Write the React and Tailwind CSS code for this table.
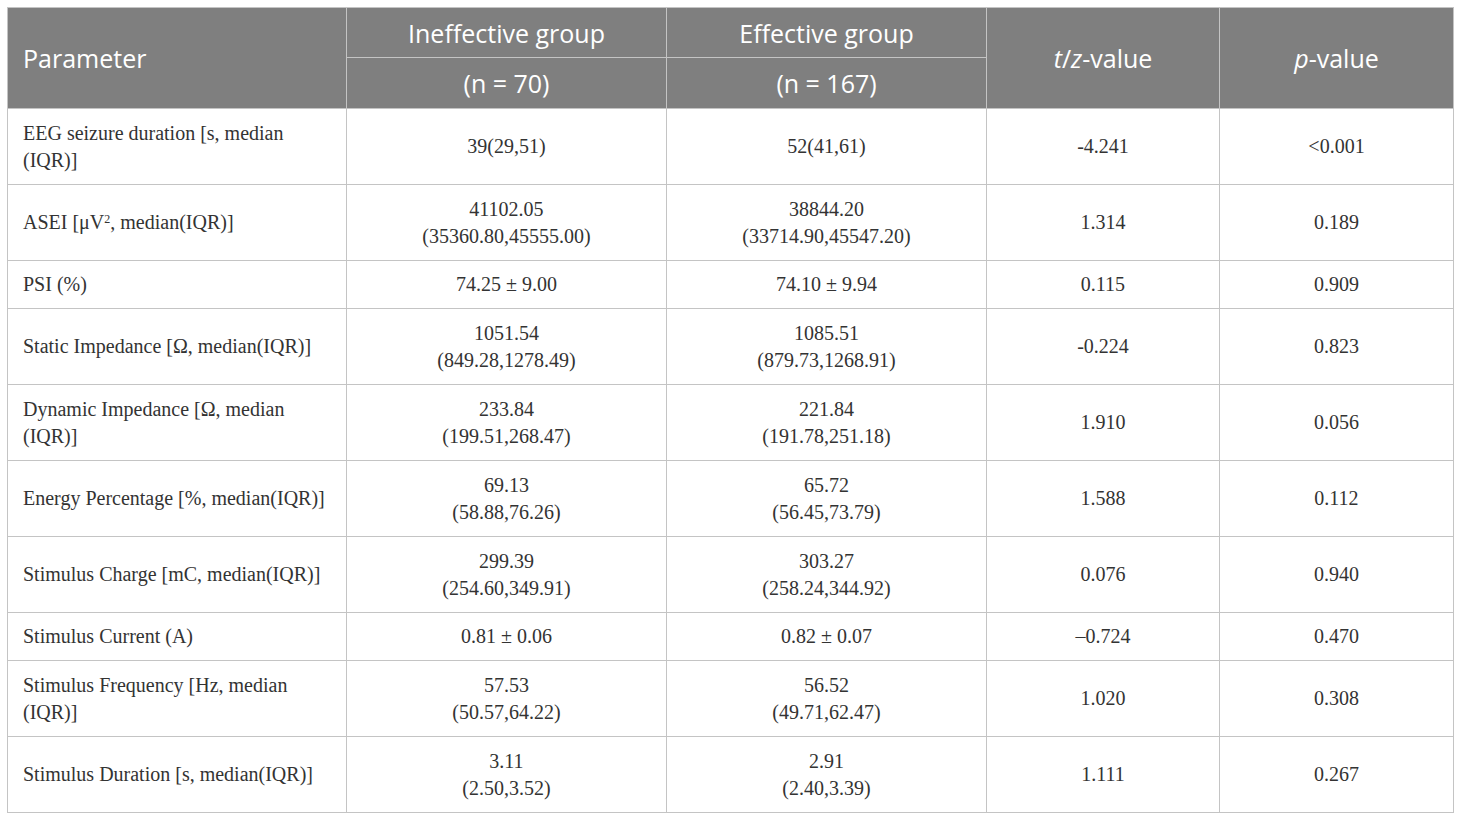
const rows = [
  { p: <>EEG seizure duration [s, median<br />(IQR)]</>, a: ["39(29,51)"], b: ["52(41,61)"], t: "-4.241", pv: "<0.001", h: "h-[76px]" },
  { p: <>ASEI [μV<sup className="text-[12px]">2</sup>, median(IQR)]</>, a: ["41102.05", "(35360.80,45555.00)"], b: ["38844.20", "(33714.90,45547.20)"], t: "1.314", pv: "0.189", h: "h-[76px]" },
  { p: "PSI (%)", a: ["74.25 ± 9.00"], b: ["74.10 ± 9.94"], t: "0.115", pv: "0.909", h: "h-[48px]" },
  { p: "Static Impedance [Ω, median(IQR)]", a: ["1051.54", "(849.28,1278.49)"], b: ["1085.51", "(879.73,1268.91)"], t: "-0.224", pv: "0.823", h: "h-[76px]" },
  { p: <>Dynamic Impedance [Ω, median<br />(IQR)]</>, a: ["233.84", "(199.51,268.47)"], b: ["221.84", "(191.78,251.18)"], t: "1.910", pv: "0.056", h: "h-[76px]" },
  { p: "Energy Percentage [%, median(IQR)]", a: ["69.13", "(58.88,76.26)"], b: ["65.72", "(56.45,73.79)"], t: "1.588", pv: "0.112", h: "h-[76px]" },
  { p: "Stimulus Charge [mC, median(IQR)]", a: ["299.39", "(254.60,349.91)"], b: ["303.27", "(258.24,344.92)"], t: "0.076", pv: "0.940", h: "h-[76px]" },
  { p: "Stimulus Current (A)", a: ["0.81 ± 0.06"], b: ["0.82 ± 0.07"], t: "–0.724", pv: "0.470", h: "h-[48px]" },
  { p: <>Stimulus Frequency [Hz, median<br />(IQR)]</>, a: ["57.53", "(50.57,64.22)"], b: ["56.52", "(49.71,62.47)"], t: "1.020", pv: "0.308", h: "h-[76px]" },
  { p: "Stimulus Duration [s, median(IQR)]", a: ["3.11", "(2.50,3.52)"], b: ["2.91", "(2.40,3.39)"], t: "1.111", pv: "0.267", h: "h-[76px]" },
];

const hd = "border border-[#c4c4c4] bg-[#7f7f7f] text-white font-normal text-[25px] leading-[30px]";
const td = "border border-[#c4c4c4] text-center align-middle";

export default function App() {
  return (
    <div className="bg-white min-h-[821px] w-[1460px] pt-[7px] pl-[7px]">
      <table className="table-fixed border-collapse w-[1446px] text-[#333] text-[20px] leading-[27px] [font-family:'Liberation_Serif',serif]">
        <colgroup>
          <col className="w-[339px]" />
          <col className="w-[320px]" />
          <col className="w-[320px]" />
          <col className="w-[233px]" />
          <col className="w-[234px]" />
        </colgroup>
        <thead className="[font-family:'Open_Sans',sans-serif]">
          <tr className="h-[50px]">
            <th rowSpan={2} className={`${hd} text-left pl-[15px]`}>Parameter</th>
            <th className={`${hd} text-center`}>Ineffective group</th>
            <th className={`${hd} text-center`}>Effective group</th>
            <th rowSpan={2} className={`${hd} text-center`}><i>t</i>/<i>z</i>-value</th>
            <th rowSpan={2} className={`${hd} text-center`}><i>p</i>-value</th>
          </tr>
          <tr className="h-[51px]">
            <th className={`${hd} text-center`}>(n = 70)</th>
            <th className={`${hd} text-center`}>(n = 167)</th>
          </tr>
        </thead>
        <tbody>
          {rows.map((r, i) => (
            <tr key={i} className={r.h}>
              <td className="border border-[#c4c4c4] text-left align-middle pl-[15px] pr-[8px] whitespace-nowrap">{r.p}</td>
              <td className={td}>{r.a.map(x => <div key={x}>{x}</div>)}</td>
              <td className={td}>{r.b.map(x => <div key={x}>{x}</div>)}</td>
              <td className={td}>{r.t}</td>
              <td className={td}>{r.pv}</td>
            </tr>
          ))}
        </tbody>
      </table>
    </div>
  );
}
